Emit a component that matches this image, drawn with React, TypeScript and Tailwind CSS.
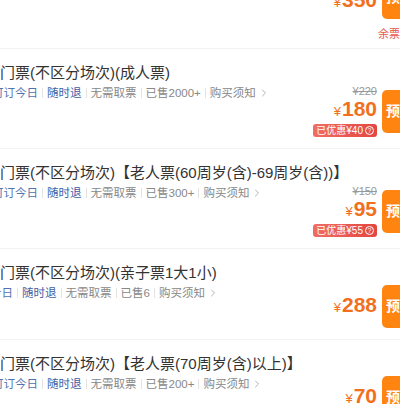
import { ChevronRight } from "lucide-react";

const font = { fontFamily: '"Liberation Sans", "Noto Sans CJK SC", sans-serif' };

type Row = {
  title: string;
  shift: string;
  sold: string;
  price: string;
  orig?: string;
  off?: string;
};

const rows: Row[] = [
  { title: "门票(不区分场次)(成人票)", shift: "-ml-[8px]", sold: "已售2000+", orig: "¥220", price: "180", off: "已优惠¥40" },
  { title: "门票(不区分场次)【老人票(60周岁(含)-69周岁(含))】", shift: "-ml-[8px]", sold: "已售300+", orig: "¥150", price: "95", off: "已优惠¥55" },
  { title: "门票(不区分场次)(亲子票1大1小)", shift: "-ml-[33px]", sold: "已售6", price: "288" },
  { title: "门票(不区分场次)【老人票(70周岁(含)以上)】", shift: "-ml-[8px]", sold: "已售200+", price: "70" },
];

function Sep() {
  return <span className="w-px h-[10px] bg-[#e3e3e3] mx-[4px] shrink-0" />;
}

function Price({ value }: { value: string }) {
  return (
    <div className="flex items-baseline text-[#f2701d] leading-[22px]">
      <span className="text-[13px] mr-[1px]">¥</span>
      <span className="text-[21px] font-bold">{value}</span>
    </div>
  );
}

function BookButton() {
  return (
    <button className="w-[36px] h-[43px] rounded-[5px] bg-[#ff8410] text-white text-[14px] font-bold flex items-center justify-center whitespace-nowrap shrink-0">
      预订
    </button>
  );
}

export default function App() {
  return (
    <div className="w-[400px] h-[404px] overflow-hidden bg-white" style={font}>
      <div className="w-[418px]">
        {/* 上一项（被裁切） */}
        <div className="h-[49px] border-b border-[#f2f2f2] flex flex-col items-end">
          <div className="-mt-[24px] flex items-end gap-[5px]">
            <div className="mb-[5px]">
              <Price value="350" />
            </div>
            <BookButton />
          </div>
          <div className="mt-[7px] -mr-[4px] text-[11px] leading-[16px] text-[#e8574c] whitespace-nowrap">余票紧张</div>
        </div>

        {rows.map((r) => (
          <div key={r.title} className="pt-[14px] pb-[11px] border-b border-[#f2f2f2]">
            <div className="text-[15px] leading-[20px] text-[#333] whitespace-nowrap">{r.title}</div>
            <div className="mt-[2px] flex items-center justify-between">
              <div className={`self-start flex items-center text-[11.5px] leading-[16px] text-[#888] whitespace-nowrap ${r.shift}`}>
                <span className="text-[#5272ad]">可订今日</span>
                <Sep />
                <span className="text-[#3d60a6]">随时退</span>
                <Sep />
                <span>无需取票</span>
                <Sep />
                <span>{r.sold}</span>
                <Sep />
                <span>购买须知</span>
                <ChevronRight className="w-[12px] h-[12px] ml-[2px] text-[#999]" strokeWidth={1.5} />
              </div>
              <div className="flex items-center gap-[5px]">
                <div className="flex flex-col items-end">
                  {r.orig && (
                    <div className="text-[11px] leading-[13px] text-[#999] line-through">{r.orig}</div>
                  )}
                  <Price value={r.price} />
                  {r.off && (
                    <div className="mt-[1px] h-[13px] px-[3px] rounded-[3px] bg-gradient-to-r from-[#f06d63] to-[#e3463f] text-white text-[10px] leading-[13px] flex items-center gap-[2px] whitespace-nowrap">
                      {r.off}
                      <span className="w-[9px] h-[9px] rounded-full border border-white text-[7px] leading-[7px] flex items-center justify-center">?</span>
                    </div>
                  )}
                </div>
                <BookButton />
              </div>
            </div>
          </div>
        ))}
      </div>
    </div>
  );
}
